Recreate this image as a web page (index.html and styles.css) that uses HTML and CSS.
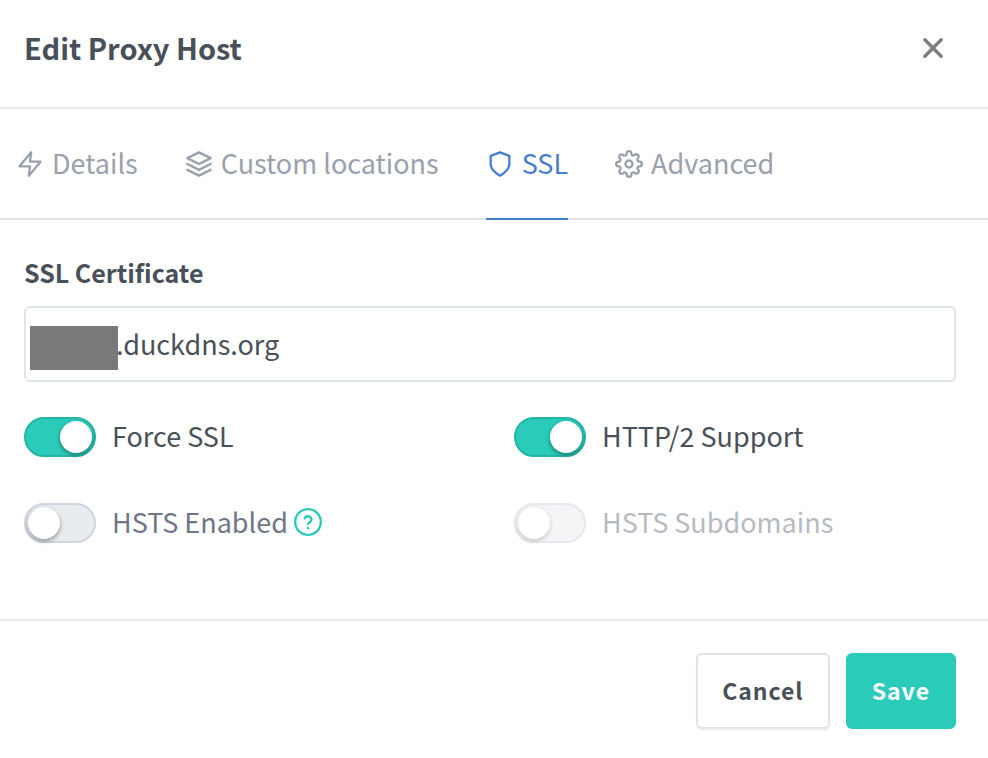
FILE: index.html
```html
<!DOCTYPE html>
<html lang="en">
<head>
<meta charset="utf-8">
<title>Edit Proxy Host</title>
<link rel="stylesheet" href="styles.css">
</head>
<body>
<form class="modal">
  <header class="modal-header">
    <h1 class="modal-title">Edit Proxy Host</h1>
    <button class="close" type="button" aria-label="Close">
      <svg viewBox="0 0 24 24"><path d="M5 5l14 14M19 5l-14 14"/></svg>
    </button>
  </header>
  <nav class="tabs">
    <a class="tab" href="#details">
      <svg class="icon" viewBox="0 0 24 24"><path d="M13 2L3 14h9l-1 8 10-12h-9l1-8z"/></svg>
      <span class="text">Details</span>
    </a>
    <a class="tab" href="#locations">
      <svg class="icon" viewBox="0 0 24 24"><path d="M12 2L2 7l10 5 10-5-10-5zM2 17l10 5 10-5M2 12l10 5 10-5"/></svg>
      <span class="text">Custom locations</span>
    </a>
    <a class="tab tab-active" href="#ssl">
      <svg class="icon" viewBox="0 0 24 24"><path d="M12 22s8-4 8-10V5l-8-3-8 3v7c0 6 8 10 8 10z"/></svg>
      <span class="text">SSL</span>
    </a>
    <a class="tab" href="#advanced">
      <svg class="icon" viewBox="0 0 24 24"><circle cx="12" cy="12" r="3"/><path d="M19.4 15a1.65 1.65 0 0 0 .33 1.82l.06.06a2 2 0 0 1 0 2.83 2 2 0 0 1-2.83 0l-.06-.06a1.65 1.65 0 0 0-1.82-.33 1.65 1.65 0 0 0-1 1.51V21a2 2 0 0 1-2 2 2 2 0 0 1-2-2v-.09A1.65 1.65 0 0 0 9 19.4a1.65 1.65 0 0 0-1.82.33l-.06.06a2 2 0 0 1-2.83 0 2 2 0 0 1 0-2.83l.06-.06a1.65 1.65 0 0 0 .33-1.82 1.65 1.65 0 0 0-1.51-1H3a2 2 0 0 1-2-2 2 2 0 0 1 2-2h.09A1.65 1.65 0 0 0 4.6 9a1.65 1.65 0 0 0-.33-1.82l-.06-.06a2 2 0 0 1 0-2.83 2 2 0 0 1 2.83 0l.06.06a1.65 1.65 0 0 0 1.82.33H9a1.65 1.65 0 0 0 1-1.51V3a2 2 0 0 1 2-2 2 2 0 0 1 2 2v.09a1.65 1.65 0 0 0 1 1.51 1.65 1.65 0 0 0 1.82-.33l.06-.06a2 2 0 0 1 2.83 0 2 2 0 0 1 0 2.83l-.06.06a1.65 1.65 0 0 0-.33 1.82V9a1.65 1.65 0 0 0 1.51 1H21a2 2 0 0 1 2 2 2 2 0 0 1-2 2h-.09a1.65 1.65 0 0 0-1.51 1z"/></svg>
      <span class="text">Advanced</span>
    </a>
  </nav>
  <main class="modal-body">
    <label class="field-label" for="certificate">SSL Certificate</label>
    <div class="field">
      <input class="field-input" id="certificate" type="text" value=".duckdns.org">
      <span class="redaction"></span>
    </div>
    <div class="options">
      <label class="option option-on">
        <input class="switch" type="checkbox" checked>
        <span class="text">Force SSL</span>
      </label>
      <label class="option option-on">
        <input class="switch" type="checkbox" checked>
        <span class="text">HTTP/2 Support</span>
      </label>
      <div class="option">
        <input class="switch" id="hsts" type="checkbox">
        <label class="text" for="hsts">HSTS Enabled</label>
        <a class="help" href="#hsts-help" aria-label="HSTS help">
          <svg class="icon" viewBox="0 0 24 24"><circle cx="12" cy="12" r="11"/><path d="M9.1 9a3 3 0 0 1 5.8 1c0 2-2.9 2.8-2.9 3.6M12 17v.4"/></svg>
        </a>
      </div>
      <label class="option option-disabled">
        <input class="switch" type="checkbox" disabled>
        <span class="text">HSTS Subdomains</span>
      </label>
    </div>
  </main>
  <footer class="modal-footer">
    <button class="button" type="button">Cancel</button>
    <button class="button button-save" type="button">Save</button>
  </footer>
</form>
</body>
</html>
```
FILE: styles.css
```css
* {
  box-sizing: border-box;
}

body {
  margin: 0;
  background: #fff;
  color: #495057;
  font-family: "Noto Sans CJK SC", "Noto Sans", sans-serif;
  font-size: 27px;
  line-height: 40px;
}

svg {
  display: block;
  fill: none;
  stroke: currentColor;
  stroke-width: 2;
  stroke-linecap: round;
  stroke-linejoin: round;
}

.modal-header {
  display: flex;
  align-items: center;
  justify-content: space-between;
  padding: 28px 41px 39px 24px;
  border-bottom: 2px solid #e9ecef;
}

.modal-title {
  margin: 0;
  padding-bottom: 2px;
  font-size: 29px;
  font-weight: 700;
  line-height: 38px;
}

.close {
  padding: 0;
  border: 0;
  background: none;
  color: #808080;
}

.close svg {
  width: 28px;
  height: 28px;
  stroke-width: 3;
}

.tabs {
  display: flex;
  gap: 47px;
  padding: 0 16px;
  border-bottom: 2px solid #dee2e6;
}

.tab {
  display: flex;
  align-items: center;
  gap: 8px;
  margin-bottom: -2px;
  padding: 35px 0 34px;
  border-bottom: 2px solid transparent;
  color: #9aa0ac;
  text-decoration: none;
}

.tab-active {
  border-color: #467fcf;
  color: #467fcf;
}

.text {
  padding-bottom: 2px;
  line-height: 38px;
}

.icon {
  width: 28px;
  height: 28px;
}

.modal-body {
  padding: 32px 32px 76px 24px;
}

.field-label {
  display: block;
  margin-bottom: 14px;
  font-size: 25px;
  font-weight: 700;
}

.field {
  position: relative;
}

.field-input {
  display: block;
  width: 100%;
  height: 76px;
  padding: 0 24px 2px 90px;
  border: 2px solid #dfe3ea;
  border-radius: 6px;
  background: #fff;
  color: inherit;
  font: inherit;
}

.redaction {
  position: absolute;
  top: 20px;
  left: 6px;
  width: 88px;
  height: 44px;
  background: #797979;
}

.options {
  display: grid;
  grid-template-columns: 1fr 1fr;
  gap: 46px 48px;
  padding-top: 35px;
}

.option {
  display: flex;
  align-items: center;
  color: #6e7687;
}

.option-on {
  color: #495057;
}

.option-disabled {
  opacity: 0.5;
}

.switch {
  appearance: none;
  flex: none;
  width: 72px;
  height: 40px;
  margin: 0 16px 0 0;
  padding: 2px;
  border: 2px solid #ced4e0;
  border-radius: 20px;
  background: #e9ecef;
}

.switch::before {
  content: "";
  display: block;
  width: 32px;
  height: 32px;
  border-radius: 50%;
  background: #fff;
  box-shadow: 0 2px 4px rgba(0, 0, 0, 0.4);
}

.switch:checked {
  border-color: #25b5a6;
  background: #2bcbba;
}

.switch:checked::before {
  margin-left: auto;
}

.help {
  margin: 0 0 2px 6px;
  color: #2bcbba;
}

.modal-footer {
  display: flex;
  justify-content: flex-end;
  gap: 16px;
  padding: 32px 32px 29px;
  border-top: 2px solid #e9ecef;
}

.button {
  padding: 15px 24px 17px;
  border: 2px solid #dfe3ea;
  border-radius: 6px;
  background: #fff;
  box-shadow: 0 2px 2px rgba(0, 0, 0, 0.05);
  color: inherit;
  font: inherit;
  font-size: 23px;
  font-weight: 700;
  line-height: 40px;
  letter-spacing: 1px;
}

.button-save {
  border-color: #2bcbba;
  background: #2bcbba;
  box-shadow: none;
  color: #fff;
}
```
